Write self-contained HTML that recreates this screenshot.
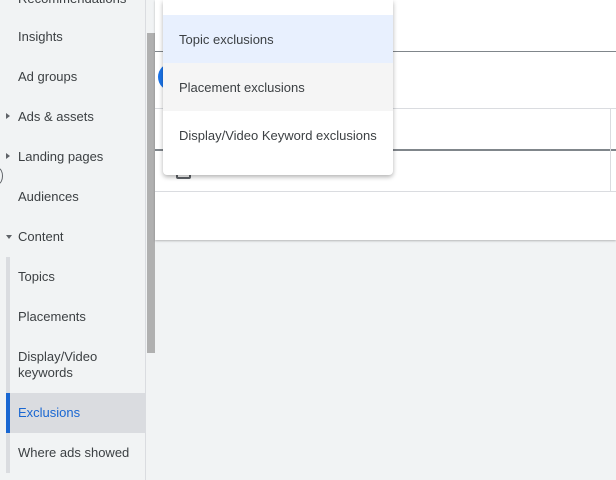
<!DOCTYPE html>
<html><head><style>
*{margin:0;padding:0;box-sizing:border-box}
body{width:616px;height:480px;overflow:hidden;background:#f1f3f4;font-family:"Liberation Sans",Arial,sans-serif;position:relative;color:#3c4043}
.nav{position:absolute;left:0;top:0;width:146px;height:480px;background:#f1f3f4;border-right:1px solid #dadce0}
.it{position:absolute;left:18px;font-size:13px;color:#3c4043;line-height:16px}
.tri{position:absolute;left:6px;width:0;height:0}
.r{border-top:3px solid transparent;border-bottom:3px solid transparent;border-left:4px solid #5f6368}
.d{border-left:3px solid transparent;border-right:3px solid transparent;border-top:4px solid #5f6368}
.abs{position:absolute}
.menu{position:absolute;left:163px;top:0;width:230px;height:175px;background:#fff;border-radius:0 0 4px 4px;box-shadow:0 2px 5px rgba(0,0,0,.3)}
.mi{position:absolute;left:0;width:230px;height:48px;font-size:13px;line-height:50px;padding-left:16px;color:#3c4043}
</style></head><body>
<div class="nav">
<div class="it" style="top:-9px">Recommendations</div>
<div class="it" style="top:29px">Insights</div>
<div class="it" style="top:69px">Ad groups</div>
<div class="tri r" style="top:113px"></div><div class="it" style="top:109px">Ads &amp; assets</div>
<div class="tri r" style="top:153px"></div><div class="it" style="top:149px">Landing pages</div>
<div class="it" style="top:189px">Audiences</div>
<div class="tri d" style="top:235px"></div><div class="it" style="top:229px">Content</div>
<div class="abs" style="left:6px;top:257px;width:4px;height:216px;background:#dadce0"></div>
<div class="abs" style="left:6px;top:393px;width:140px;height:40px;background:#dadce0"></div>
<div class="abs" style="left:6px;top:393px;width:4px;height:40px;background:#1967d2"></div>
<div class="it" style="top:269px">Topics</div>
<div class="it" style="top:309px">Placements</div>
<div class="it" style="top:349px">Display/Video<br>keywords</div>
<div class="it" style="top:405px;color:#1967d2">Exclusions</div>
<div class="it" style="top:445px">Where ads showed</div>
</div>
<div class="abs" style="left:-6px;top:168px;width:9px;height:16px;border-radius:50%;border:1px solid #5f6368"></div>
<div class="abs" style="left:147px;top:33px;width:8px;height:320px;background:#b0b0b0"></div>
<div class="abs" style="left:155px;top:0;width:461px;height:240px;background:#fff;box-shadow:0 1px 2px rgba(0,0,0,.25)"></div>
<div class="abs" style="left:155px;top:51px;width:461px;height:1px;background:#80868b"></div>
<div class="abs" style="left:155px;top:108px;width:461px;height:1px;background:#dadce0"></div>
<div class="abs" style="left:155px;top:149px;width:461px;height:2px;background:#80868b"></div>
<div class="abs" style="left:155px;top:191px;width:461px;height:1px;background:#dadce0"></div>
<div class="abs" style="left:610px;top:108px;width:1px;height:84px;background:#dadce0"></div>
<div class="abs" style="left:158px;top:63px;width:28px;height:28px;border-radius:50%;background:#1a73e8"></div>
<div class="abs" style="left:176px;top:164px;width:15px;height:15px;border:2px solid #5f6368;border-radius:2px"></div>
<div class="menu">
<div class="mi" style="top:15px;background:#e8f0fe">Topic exclusions</div>
<div class="mi" style="top:63px;background:#f5f5f5">Placement exclusions</div>
<div class="mi" style="top:111px">Display/Video Keyword exclusions</div>
</div>
</body></html>
